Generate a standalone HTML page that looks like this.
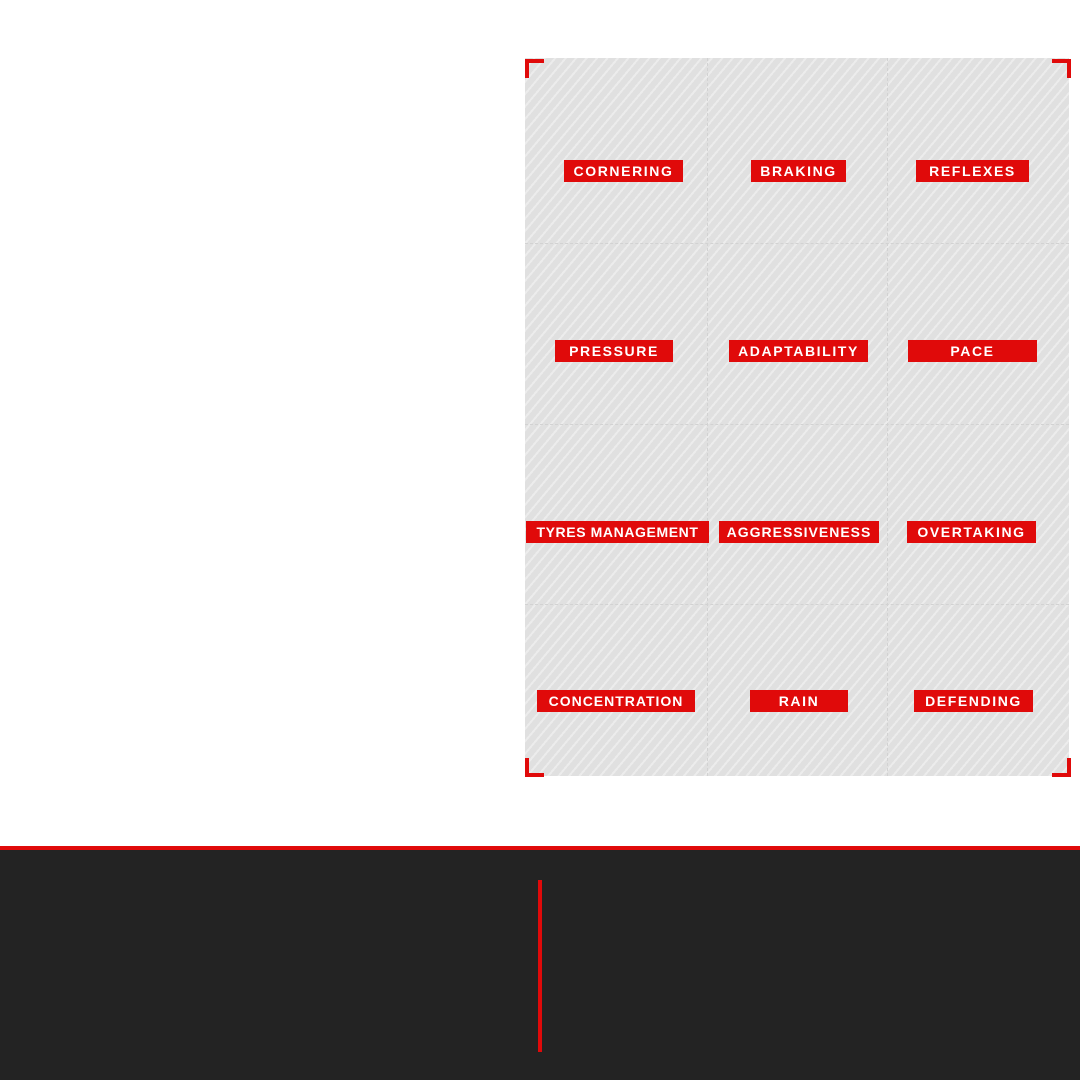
<!DOCTYPE html>
<html><head><meta charset="utf-8"><style>
html,body{margin:0;padding:0;width:1080px;height:1080px;overflow:hidden;background:#fff;position:relative;font-family:"Liberation Sans",sans-serif}
.panel{position:absolute;left:525px;top:58px;width:544px;height:718px;background:#e2e2e2;
background-image:repeating-linear-gradient(-50deg,#e0e0e0 0 6px,#ececec 6px 8px);}
.vl{position:absolute;top:0;bottom:0;width:0;border-left:1px dashed #d2d2d2}
.hl{position:absolute;left:0;right:0;height:0;border-top:1px dashed #d2d2d2}
.c{position:absolute;border-color:#e00a0a;border-style:solid;width:15px;height:15px}
.lab{position:absolute;height:22px;background:#e00a0a;color:#fff;font-weight:bold;font-size:14px;letter-spacing:1.6px;line-height:22px;text-align:center;white-space:nowrap}
.dark{position:absolute;left:0;top:850px;width:1080px;height:230px;background:#232323}
.red{position:absolute;left:0;top:846px;width:1080px;height:4px;background:#e00a0a}
.vr{position:absolute;left:538px;top:880px;width:4px;height:172px;background:#e00a0a}
</style></head><body>
<div class="panel">
<div class="vl" style="left:182px"></div><div class="vl" style="left:362px"></div>
<div class="hl" style="top:185px"></div><div class="hl" style="top:366px"></div><div class="hl" style="top:546px"></div>
</div>
<div class="c" style="left:525px;top:59px;border-width:4px 0 0 4px"></div>
<div class="c" style="left:1052px;top:59px;border-width:4px 4px 0 0"></div>
<div class="c" style="left:525px;top:758px;border-width:0 0 4px 4px"></div>
<div class="c" style="left:1052px;top:758px;border-width:0 4px 4px 0"></div>

<div class="lab" style="left:564px;top:160px;width:119px">CORNERING</div>
<div class="lab" style="left:751px;top:160px;width:95px">BRAKING</div>
<div class="lab" style="left:916px;top:160px;width:113px">REFLEXES</div>
<div class="lab" style="left:555px;top:340px;width:118px">PRESSURE</div>
<div class="lab" style="left:729px;top:340px;width:139px">ADAPTABILITY</div>
<div class="lab" style="left:908px;top:340px;width:129px">PACE</div>
<div class="lab" style="left:526px;top:521px;width:183px;letter-spacing:0.6px">TYRES MANAGEMENT</div>
<div class="lab" style="left:719px;top:521px;width:160px;letter-spacing:1px">AGGRESSIVENESS</div>
<div class="lab" style="left:907px;top:521px;width:129px">OVERTAKING</div>
<div class="lab" style="left:537px;top:690px;width:158px;letter-spacing:1px">CONCENTRATION</div>
<div class="lab" style="left:750px;top:690px;width:98px">RAIN</div>
<div class="lab" style="left:914px;top:690px;width:119px">DEFENDING</div>

<div class="dark"></div><div class="red"></div><div class="vr"></div>
</body></html>
